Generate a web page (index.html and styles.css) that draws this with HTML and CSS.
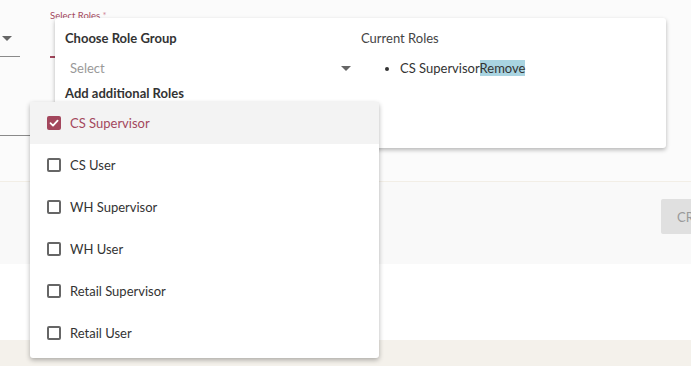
FILE: index.html
```html
<!DOCTYPE html>
<html>
<head>
<meta charset="utf-8">
<link rel="stylesheet" href="styles.css">
</head>
<body>
<div class="page">
  <section class="form">
    <div class="row row-top">
      <div class="field field-a">
        <span class="caret"></span>
      </div>
      <div class="field field-roles">
        <label class="label">Select Roles <span class="req">*</span></label>
      </div>
    </div>
    <div class="row row-second">
      <div class="field field-c"></div>
    </div>
  </section>
  <section class="actions">
    <button class="btn">CREATE</button>
  </section>
  <section class="blank"></section>
  <section class="footer"></section>

  <div class="roles-card">
    <div class="col-left">
      <div class="heading">Choose Role Group</div>
      <div class="select-line">
        <span class="placeholder">Select</span>
        <span class="caret"></span>
      </div>
      <div class="heading">Add additional Roles</div>
    </div>
    <div class="col-right">
      <div class="cur-title">Current Roles</div>
      <ul class="cur-list">
        <li>CS Supervisor<span class="remove">Remove</span></li>
      </ul>
    </div>
  </div>

  <ul class="menu">
    <li class="opt selected"><span class="box checked"><svg viewBox="0 0 14 14" width="14" height="14"><path d="M3.5 7.2 L6 9.6 L10.6 4.6" fill="none" stroke="#fff" stroke-width="1.8" stroke-linecap="round" stroke-linejoin="round"/></svg></span>CS Supervisor</li>
    <li class="opt"><span class="box"></span>CS User</li>
    <li class="opt"><span class="box"></span>WH Supervisor</li>
    <li class="opt"><span class="box"></span>WH User</li>
    <li class="opt"><span class="box"></span>Retail Supervisor</li>
    <li class="opt"><span class="box"></span>Retail User</li>
  </ul>
</div>
</body>
</html>
```

FILE: styles.css
```css
* { box-sizing: border-box; }
html, body { margin: 0; padding: 0; }
body {
  font-family: Lato, "Open Sans", sans-serif;
  font-size: 13px;
  color: #333;
  background: #fff;
  width: 691px;
  height: 366px;
  overflow: hidden;
}
.page { position: relative; width: 691px; height: 366px; overflow: hidden; }

.form {
  height: 182px;
  background: #fbfbfb;
  border-bottom: 1px solid #f2eee6;
  display: flex;
  flex-direction: column;
}
.row { display: flex; }
.row-top { height: 58px; gap: 30px; margin-left: -150px; }
.field-a {
  width: 170px;
  height: 57px;
  border-bottom: 1px solid #8a8a8a;
  display: flex;
  justify-content: flex-end;
  align-items: flex-start;
  padding-top: 36px;
  padding-right: 8px;
}
.caret {
  display: inline-block;
  width: 0; height: 0;
  border-left: 5px solid transparent;
  border-right: 5px solid transparent;
  border-top: 5px solid #666;
}
.field-roles {
  width: 400px;
  height: 58px;
  border-bottom: 2px solid #a3475d;
  padding-top: 6px;
}
.label { font-size: 9.5px; color: #a3475d; }
.req { color: #d08a9a; }
.row-second { margin-top: 18px; margin-left: -150px; }
.field-c { width: 180px; height: 60px; border-bottom: 1px solid #8a8a8a; }

.actions {
  height: 82px;
  background: #f9f9f9;
  display: flex;
  justify-content: flex-end;
  align-items: flex-start;
  padding-top: 17px;
  overflow: hidden;
}
.btn {
  flex: none;
  margin-right: -60px;
  width: 90px;
  height: 35px;
  border: 0;
  border-radius: 2px;
  background: #e0e0e0;
  color: #9a9a9a;
  font-family: Lato, sans-serif;
  font-size: 13px;
  text-align: left;
  padding-left: 16px;
}
.blank { height: 76px; background: #fff; }
.footer { height: 26px; background: #f4f1eb; }

.roles-card {
  position: absolute;
  left: 55px; top: 18px;
  width: 611px; height: 130px;
  background: #fff;
  border-radius: 3px;
  box-shadow: 0 2px 4px rgba(0,0,0,0.28);
  display: flex;
  padding: 12px 10px 0 10px;
}
.col-left { width: 296px; display: flex; flex-direction: column; }
.heading { font-weight: 700; font-size: 13px; color: #333; line-height: 17px; }
.select-line {
  height: 38px;
  display: flex;
  align-items: center;
  justify-content: space-between;
  padding: 4px 10px 0 5px;
}
.placeholder { color: #999; }
.col-right { padding-left: 0; }
.cur-title { line-height: 17px; color: #444; }
.cur-list { margin: 13px 0 0 0; padding-left: 39px; line-height: 17px; color: #333; }
.remove { background: #a9d4e1; }

.menu {
  position: absolute;
  left: 30px; top: 102px;
  width: 349px; height: 256px;
  margin: 0; padding: 0;
  list-style: none;
  background: #fff;
  border-radius: 3px;
  box-shadow: 0 2px 5px rgba(0,0,0,0.3);
}
.opt {
  height: 42px;
  display: flex;
  align-items: center;
  padding-left: 17px;
  gap: 9px;
  color: #333;
}
.opt.selected { background: #f3f3f3; color: #a3475d; }
.box {
  width: 14px; height: 14px;
  border: 2px solid #666;
  border-radius: 2px;
  display: inline-block;
  flex: none;
}
.box.checked {
  border: 0;
  background: #a3475d;
}
.box svg { display: block; }
```
